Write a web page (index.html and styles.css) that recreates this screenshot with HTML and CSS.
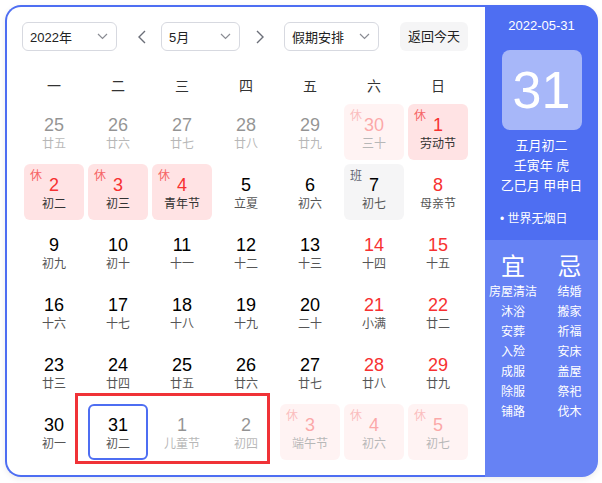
FILE: index.html
```html
<!DOCTYPE html>
<html lang="zh-CN">
<head>
<meta charset="utf-8">
<title>万年历</title>
<link rel="stylesheet" href="styles.css">
</head>
<body>
<div class="wrap">
  <div class="main">
    <div class="controls">
      <div class="select year"><span>2022年</span><svg class="chev" width="11" height="7" viewBox="0 0 11 7"><polyline points="1,1 5.5,5.5 10,1"/></svg></div>
      <svg class="arrow prev" width="8" height="14" viewBox="0 0 8 14"><polyline points="7,1 1,7 7,13"/></svg>
      <div class="select month"><span>5月</span><svg class="chev" width="11" height="7" viewBox="0 0 11 7"><polyline points="1,1 5.5,5.5 10,1"/></svg></div>
      <svg class="arrow next" width="8" height="14" viewBox="0 0 8 14"><polyline points="1,1 7,7 1,13"/></svg>
      <div class="select holiday"><span>假期安排</span><svg class="chev" width="11" height="7" viewBox="0 0 11 7"><polyline points="1,1 5.5,5.5 10,1"/></svg></div>
      <div class="today">返回今天</div>
    </div>
    <div class="week">
      <span>一</span><span>二</span><span>三</span><span>四</span><span>五</span><span>六</span><span>日</span>
    </div>
    <div class="grid">
      <div class="cell other"><span class="num">25</span><span class="lunar">廿五</span></div>
      <div class="cell other"><span class="num">26</span><span class="lunar">廿六</span></div>
      <div class="cell other"><span class="num">27</span><span class="lunar">廿七</span></div>
      <div class="cell other"><span class="num">28</span><span class="lunar">廿八</span></div>
      <div class="cell other"><span class="num">29</span><span class="lunar">廿九</span></div>
      <div class="cell other rest red"><span class="tag">休</span><span class="num">30</span><span class="lunar">三十</span></div>
      <div class="cell rest red"><span class="tag">休</span><span class="num">1</span><span class="lunar">劳动节</span></div>

      <div class="cell rest red"><span class="tag">休</span><span class="num">2</span><span class="lunar">初二</span></div>
      <div class="cell rest red"><span class="tag">休</span><span class="num">3</span><span class="lunar">初三</span></div>
      <div class="cell rest red"><span class="tag">休</span><span class="num">4</span><span class="lunar">青年节</span></div>
      <div class="cell"><span class="num">5</span><span class="lunar">立夏</span></div>
      <div class="cell"><span class="num">6</span><span class="lunar">初六</span></div>
      <div class="cell work"><span class="tag">班</span><span class="num">7</span><span class="lunar">初七</span></div>
      <div class="cell red"><span class="num">8</span><span class="lunar">母亲节</span></div>

      <div class="cell"><span class="num">9</span><span class="lunar">初九</span></div>
      <div class="cell"><span class="num">10</span><span class="lunar">初十</span></div>
      <div class="cell"><span class="num">11</span><span class="lunar">十一</span></div>
      <div class="cell"><span class="num">12</span><span class="lunar">十二</span></div>
      <div class="cell"><span class="num">13</span><span class="lunar">十三</span></div>
      <div class="cell red"><span class="num">14</span><span class="lunar">十四</span></div>
      <div class="cell red"><span class="num">15</span><span class="lunar">十五</span></div>

      <div class="cell"><span class="num">16</span><span class="lunar">十六</span></div>
      <div class="cell"><span class="num">17</span><span class="lunar">十七</span></div>
      <div class="cell"><span class="num">18</span><span class="lunar">十八</span></div>
      <div class="cell"><span class="num">19</span><span class="lunar">十九</span></div>
      <div class="cell"><span class="num">20</span><span class="lunar">二十</span></div>
      <div class="cell red"><span class="num">21</span><span class="lunar">小满</span></div>
      <div class="cell red"><span class="num">22</span><span class="lunar">廿二</span></div>

      <div class="cell"><span class="num">23</span><span class="lunar">廿三</span></div>
      <div class="cell"><span class="num">24</span><span class="lunar">廿四</span></div>
      <div class="cell"><span class="num">25</span><span class="lunar">廿五</span></div>
      <div class="cell"><span class="num">26</span><span class="lunar">廿六</span></div>
      <div class="cell"><span class="num">27</span><span class="lunar">廿七</span></div>
      <div class="cell red"><span class="num">28</span><span class="lunar">廿八</span></div>
      <div class="cell red"><span class="num">29</span><span class="lunar">廿九</span></div>

      <div class="cell"><span class="num">30</span><span class="lunar">初一</span></div>
      <div class="cell sel"><span class="num">31</span><span class="lunar">初二</span></div>
      <div class="cell other"><span class="num">1</span><span class="lunar">儿童节</span></div>
      <div class="cell other"><span class="num">2</span><span class="lunar">初四</span></div>
      <div class="cell other rest red"><span class="tag">休</span><span class="num">3</span><span class="lunar">端午节</span></div>
      <div class="cell other rest red"><span class="tag">休</span><span class="num">4</span><span class="lunar">初六</span></div>
      <div class="cell other rest red"><span class="tag">休</span><span class="num">5</span><span class="lunar">初七</span></div>
    </div>
  </div>
  <div class="panel">
    <div class="panel-top">
      <div class="date">2022-05-31</div>
      <div class="bigday">31</div>
      <div class="ganzhi">
        <div>五月初二</div>
        <div>壬寅年 虎</div>
        <div>乙巳月 甲申日</div>
      </div>
      <div class="fest">• 世界无烟日</div>
    </div>
    <div class="panel-bottom">
      <div class="col">
        <div class="head">宜</div>
        <div>房屋清洁</div><div>沐浴</div><div>安葬</div><div>入殓</div><div>成服</div><div>除服</div><div>铺路</div>
      </div>
      <div class="col">
        <div class="head">忌</div>
        <div>结婚</div><div>搬家</div><div>祈福</div><div>安床</div><div>盖屋</div><div>祭祀</div><div>伐木</div>
      </div>
    </div>
  </div>
</div>
<div class="mark"></div>
</body>
</html>
```

FILE: styles.css
```css
* { box-sizing: border-box; }
html, body { margin: 0; padding: 0; background: #fff; }
body {
  font-family: "Liberation Sans", "Noto Sans CJK SC", sans-serif;
  color: #222;
  position: relative;
  width: 602px;
  height: 483px;
}
.wrap {
  margin: 5px 0 0 5px;
  width: 593px;
  height: 472px;
  display: flex;
  border-radius: 16px;
  box-shadow: 0 2px 6px rgba(0,0,0,0.08);
}
.main {
  width: 480px;
  height: 472px;
  border: 2px solid #4e6ef2;
  border-right: none;
  border-radius: 16px 0 0 16px;
  padding: 15px 0 0 15px;
  background: #fff;
}
.controls {
  display: flex;
  align-items: center;
  height: 29px;
}
.select {
  height: 29px;
  border: 1px solid #d7d9e0;
  border-radius: 6px;
  display: flex;
  align-items: center;
  justify-content: space-between;
  padding: 0 8px 0 7px;
  font-size: 13px;
  color: #222;
}
.select.year { width: 95px; }
.select.month { width: 79px; }
.select.holiday { width: 95px; }
.chev polyline {
  fill: none;
  stroke: #8a8c93;
  stroke-width: 1.2;
}
.arrow polyline {
  fill: none;
  stroke: #6b6e78;
  stroke-width: 1.4;
}
.arrow.prev { margin: 0 15px 0 21px; }
.arrow.next { margin: 0 20px 0 16px; }
.today {
  margin-left: 21px;
  width: 68px;
  height: 29px;
  line-height: 29px;
  text-align: center;
  background: #f5f5f6;
  border-radius: 6px;
  font-size: 13px;
  color: #222;
}
.week {
  display: grid;
  grid-template-columns: repeat(7, 60px);
  column-gap: 4px;
  margin-left: 2px;
  height: 53px;
  align-items: end;
  padding-bottom: 8px;
  font-size: 14px;
  line-height: 20px;
  color: #333;
  text-align: center;
}
.grid {
  display: grid;
  grid-template-columns: repeat(7, 60px);
  grid-auto-rows: 56px;
  gap: 4px;
  margin-left: 2px;
}
.cell {
  position: relative;
  border-radius: 6px;
  padding-top: 10px;
  display: flex;
  flex-direction: column;
  align-items: center;
}
.num {
  font-size: 18px;
  line-height: 22px;
  color: #000;
}
.lunar {
  font-size: 12px;
  line-height: 16px;
  color: #555;
}
.tag {
  position: absolute;
  left: 6px;
  top: 5px;
  font-size: 12px;
  line-height: 14px;
  color: #f66565;
}
.rest { background: #ffe3e4; }
.rest .lunar { color: #333; }
.work { background: #f5f5f6; }
.work .tag { color: #626675; }
.red .num { color: #f73131; }
.other { opacity: 0.42; }
.other.rest .lunar { color: #555; }
.sel { border: 2px solid #4e6ef2; padding-top: 8px; }

.panel {
  width: 113px;
  height: 472px;
  border-radius: 0 16px 16px 0;
  overflow: hidden;
  display: flex;
  flex-direction: column;
  color: #fff;
}
.panel-top {
  height: 235px;
  background: #4e6ef2;
  padding-top: 11px;
  display: flex;
  flex-direction: column;
  align-items: center;
}
.date {
  font-size: 13px;
  line-height: 20px;
}
.bigday {
  margin-top: 14px;
  width: 80px;
  height: 80px;
  border-radius: 8px;
  background: rgba(255,255,255,0.5);
  font-size: 52px;
  line-height: 80px;
  text-align: center;
}
.ganzhi {
  margin-top: 6px;
  font-size: 13px;
  line-height: 20px;
  text-align: center;
}
.fest {
  margin-top: 13px;
  align-self: flex-start;
  padding-left: 15px;
  font-size: 12px;
  line-height: 20px;
}
.panel-bottom {
  flex: 1;
  background: #6682f4;
  display: grid;
  grid-template-columns: 56px 57px;
  padding-top: 13px;
}
.col {
  text-align: center;
  font-size: 12px;
  line-height: 20px;
  white-space: nowrap;
}
.col .head {
  font-size: 24px;
  line-height: 28px;
  margin-bottom: 1px;
}
.mark {
  position: absolute;
  left: 75px;
  top: 393px;
  width: 195px;
  height: 71px;
  border: 3px solid #f03237;
}
```
